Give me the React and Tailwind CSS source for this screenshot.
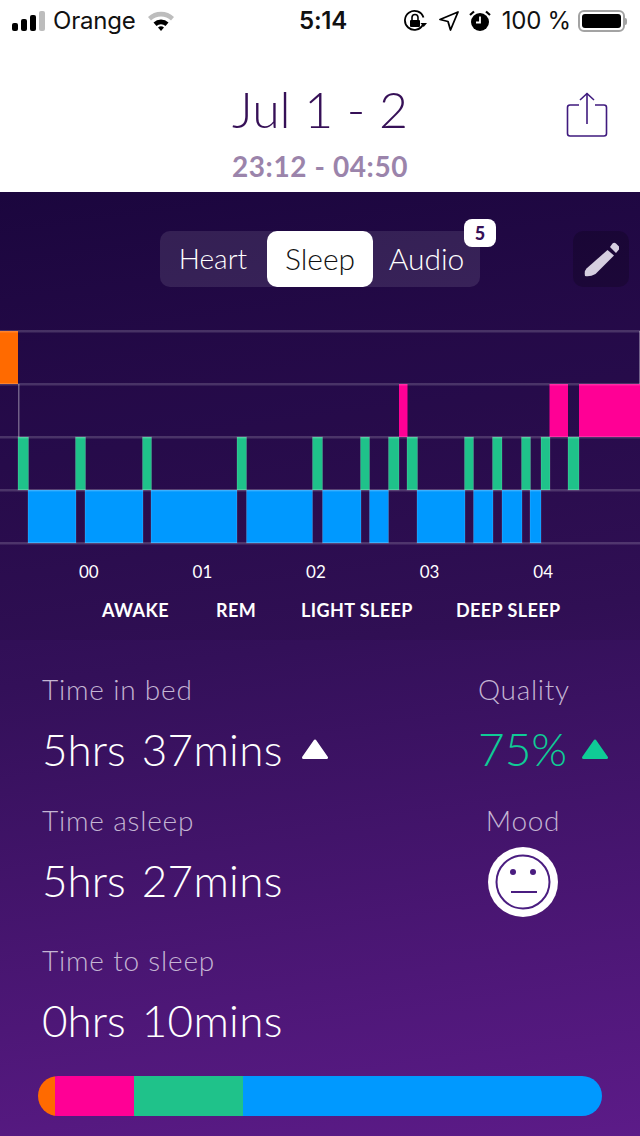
const GREEN = [[18, 28.5], [75.5, 85.5], [142.5, 151.5], [237, 246.5], [312.5, 322.5], [360.5, 369.5], [388.5, 399], [407, 417.5], [464.5, 473.5], [492.5, 502], [521.5, 530.5], [541, 550], [568, 579]];
const BLUE = [[28, 76], [85, 143], [151, 237], [246.5, 312.5], [322.5, 361], [369.5, 388.5], [417, 465], [473.5, 493], [502, 522], [530, 541]];
const PINK = [[399, 407.5], [549.5, 568], [579, 640]];

const Hours = ["00", "01", "02", "03", "04"];

const sans = "font-['Lato',sans-serif]";

function StatusBar() {
  return (
    <div className="flex h-[42px] items-center pl-3 pr-[13px] font-['Inter',sans-serif] text-[24px] leading-none tracking-[-0.2px] text-[#111]">
      <div className="flex w-[287px] items-center">
        <svg width="33" height="22" viewBox="0 0 33 22" className="mr-2">
          <rect x="0" y="13" width="6" height="8" rx="2" fill="#000" />
          <rect x="9" y="9" width="6" height="12" rx="2" fill="#000" />
          <rect x="18" y="5" width="6" height="16" rx="2" fill="#000" />
          <rect x="27" y="1" width="6" height="20" rx="2" fill="#bdbdbd" />
        </svg>
        <span className="font-normal">Orange</span>
        <svg width="28" height="22" viewBox="0 0 28 22" className="ml-[11px]">
          <path d="M1 7 A19 19 0 0 1 27 7 L24 10.5 A14.5 14.5 0 0 0 4 10.5 Z" fill="#bdbdbd" />
          <path d="M6.5 12.5 A11 11 0 0 1 21.5 12.5 L18.5 16 A6.5 6.5 0 0 0 9.5 16 Z" fill="#000" />
          <path d="M11 17.5 A4.5 4.5 0 0 1 17 17.5 L14 21 Z" fill="#000" />
        </svg>
      </div>
      <div className="font-semibold">5:14</div>
      <div className="flex flex-1 items-center justify-end">
        <svg width="24" height="24" viewBox="0 0 24 24" fill="none" className="mr-[11px]">
          <path d="M20 15.5 A9.5 9.5 0 1 1 20.5 8.5" stroke="#000" strokeWidth="1.8" />
          <path d="M17.5 14 L24 14 L20.7 18 Z" fill="#000" />
          <rect x="7" y="11" width="10" height="7" rx="1" fill="#000" />
          <path d="M9 11 V8.5 A3 3 0 0 1 15 8.5 V11" stroke="#000" strokeWidth="1.6" />
        </svg>
        <svg width="22" height="22" viewBox="0 0 22 22" fill="none" className="mr-[9px]">
          <path d="M20 2 L12.5 20 L10 11.5 L2 9.5 Z" stroke="#000" strokeWidth="1.8" strokeLinejoin="round" />
        </svg>
        <svg width="22" height="24" viewBox="0 0 22 24" className="mr-[11px]">
          <circle cx="11" cy="13" r="9" fill="#000" />
          <path d="M11 7.5 V13.5 H7" stroke="#fff" strokeWidth="1.8" fill="none" />
          <path d="M1 6 L5 2.5 M21 6 L17 2.5" stroke="#000" strokeWidth="2.2" />
        </svg>
        <span className="mr-[7px]">100 %</span>
        <div className="flex items-center">
          <div className="h-[22px] w-[47px] rounded-[6px] border-2 border-[#a3a3a3] p-[2px]">
            <div className="h-full w-full rounded-[3px] bg-black" />
          </div>
          <div className="h-[7px] w-[2px] rounded-r-sm bg-[#a3a3a3]" />
        </div>
      </div>
    </div>
  );
}

function Header() {
  return (
    <div className={`relative flex h-[150px] flex-col items-center bg-white ${sans}`}>
      <div className="mt-[42px] text-[50px] font-light leading-none text-[#361057]">Jul 1 - 2</div>
      <div className="mt-[18px] text-[28px] font-bold leading-none tracking-[0.6px] text-[#9b84ab]">23:12 - 04:50</div>
      <svg width="42" height="46" viewBox="0 0 42 46" fill="none" className="absolute right-[32px] top-[50px]" stroke="#3f1a7e" strokeWidth="1.6">
        <path d="M13 13 H4 Q1.5 13 1.5 15.5 V41.5 Q1.5 44 4 44 H38 Q40.5 44 40.5 41.5 V15.5 Q40.5 13 38 13 H29" />
        <path d="M21 1.5 V32" />
        <path d="M14 8 L21 1.5 L28 8" />
      </svg>
    </div>
  );
}

function Tabs() {
  return (
    <div className={`relative flex h-14 items-center ${sans}`}>
      <div className="relative mx-auto flex h-14 w-80 items-center rounded-[10px] bg-white/10 text-[30px] font-light text-white">
        <div className="w-[107px] pb-[2px] pr-[1px] text-center text-[28px]">Heart</div>
        <div className="flex h-14 w-[106px] items-center justify-center rounded-[10px] bg-white pb-[2px] text-[#111]">Sleep</div>
        <div className="w-[107px] pb-[2px] text-center">Audio</div>
        <div className="absolute -top-3 right-[-16px] flex h-7 w-8 items-center justify-center rounded-lg bg-white text-[18px] font-black text-[#361057]">5</div>
      </div>
      <div className="absolute right-[11px] top-0 flex h-14 w-14 items-center justify-center rounded-[10px] bg-black/20">
        <svg width="36" height="36" viewBox="0 0 36 36" fill="#d6cfe0">
          <path d="M24.5 9 L31 14.5 L12.5 33 Q7 36 2 35 Q1 30 3.5 27.5 Z" />
          <path d="M27 6 L29.5 2.5 Q31.2 1 33 2.5 L36 5.5 Q37 7.5 35.5 9 L33 12 Z" />
        </svg>
      </div>
    </div>
  );
}

function Chart() {
  const line = "rgba(255,255,255,0.17)";
  const edge = "rgba(255,255,255,0.14)";
  return (
    <svg width="640" height="216" viewBox="0 0 640 216" className="mt-[42px] block">
      <rect x="0" y="2" width="18" height="53" fill="#ff6a00" />
      {PINK.map(([a, b]) => <rect key={a} x={a} y="55" width={b - a} height="53" fill="#ff0095" />)}
      {GREEN.map(([a, b]) => <rect key={a} x={a} y="108" width={b - a} height="53" fill="#1fc28a" stroke={edge} />)}
      {BLUE.map(([a, b]) => <rect key={a} x={a} y="161" width={b - a} height="53" fill="#0099ff" stroke={edge} />)}
      {[2, 55, 108, 161, 214].map(y => <rect key={y} x="0" y={y - 1} width="640" height="2.5" fill={line} />)}
      <rect x="18" y="55" width="1.5" height="53" fill="rgba(255,255,255,0.35)" />
      <rect x="639" y="2" width="1" height="53" fill="rgba(255,255,255,0.35)" />
    </svg>
  );
}

function Legend() {
  return (
    <div className={`text-white ${sans}`}>
      <div className="flex pl-[32px] pt-[17px] text-[17px] leading-5">
        {Hours.map(h => <div key={h} className="w-[113.6px] text-center">{h}</div>)}
      </div>
      <div className="mt-[18px] flex pl-[102px] text-[18px] font-bold leading-5 tracking-[0.4px]">
        <span className="w-[114px]">AWAKE</span>
        <span className="w-[85px]">REM</span>
        <span className="w-[155px]">LIGHT SLEEP</span>
        <span>DEEP SLEEP</span>
      </div>
    </div>
  );
}

function Triangle({ color }) {
  return (
    <svg width="26" height="20" viewBox="0 0 26 20">
      <path d="M13 2 L24.5 18.5 H1.5 Z" fill={color} stroke={color} strokeWidth="3" strokeLinejoin="round" />
    </svg>
  );
}

function Stat({ label, hrs, mins, up, className }) {
  return (
    <div className={className}>
      <div className="text-[28px] font-light leading-8 tracking-[0.8px] text-[#c4b5d3]">{label}</div>
      <div className="mt-[22px] flex h-[44px] items-center text-[44px] font-light leading-none text-white">
        <span>{hrs}hrs</span>
        <span className="ml-[16px] tracking-[0.3px]">{mins}mins</span>
        {up && <span className="ml-[19px]"><Triangle color="#ffffff" /></span>}
      </div>
    </div>
  );
}

function Face() {
  return (
    <svg width="70" height="70" viewBox="0 0 70 70">
      <circle cx="35" cy="35" r="35" fill="#fff" />
      <circle cx="35" cy="35" r="26.5" fill="none" stroke="#4a1d80" strokeWidth="2" />
      <circle cx="25" cy="25" r="3" fill="#4a1d80" />
      <circle cx="45" cy="25" r="3" fill="#4a1d80" />
      <rect x="23" y="44" width="26" height="2" fill="#4a1d80" />
    </svg>
  );
}

export default function App() {
  return (
    <div className="h-[1136px] w-[640px] overflow-hidden bg-white">
      <StatusBar />
      <Header />
      <div className="h-[944px] bg-[linear-gradient(172deg,#1d0742_0%,#331059_48%,#5c1b88_100%)]">
        <div className="h-[448px] bg-black/5 pt-[39px]">
          <Tabs />
          <Chart />
          <Legend />
        </div>
        <div className={`px-[42px] ${sans}`}>
          <div className="flex justify-between pt-[33px]">
            <Stat label="Time in bed" hrs="5" mins="37" up />
            <div className="mr-[-12px] flex w-[132px] flex-col items-start">
              <div className="text-[28px] font-light leading-8 tracking-[0.7px] text-[#c4b5d3]">Quality</div>
              <div className="mt-[22px] flex h-[44px] items-center text-[46px] font-light leading-none text-[#0fcb96]">
                <span>75%</span>
                <span className="ml-[15px]"><Triangle color="#0fcb96" /></span>
              </div>
            </div>
          </div>
          <div className="flex justify-between pt-[33px]">
            <Stat label="Time asleep" hrs="5" mins="27" />
            <div className="mr-[35px] flex w-[80px] flex-col items-center">
              <div className="text-[28px] font-light leading-8 tracking-[0.7px] text-[#c4b5d3]">Mood</div>
              <div className="mt-[11px]"><Face /></div>
            </div>
          </div>
          <Stat label="Time to sleep" hrs="0" mins="10" className="pt-[27px]" />
        </div>
        <div className="mx-[38px] mt-[34px] flex h-10 overflow-hidden rounded-full">
          <div className="w-[17px] bg-[#ff6a00]" />
          <div className="w-[79px] bg-[#ff0095]" />
          <div className="w-[109px] bg-[#1fc28a]" />
          <div className="flex-1 bg-[#0099ff]" />
        </div>
      </div>
    </div>
  );
}
